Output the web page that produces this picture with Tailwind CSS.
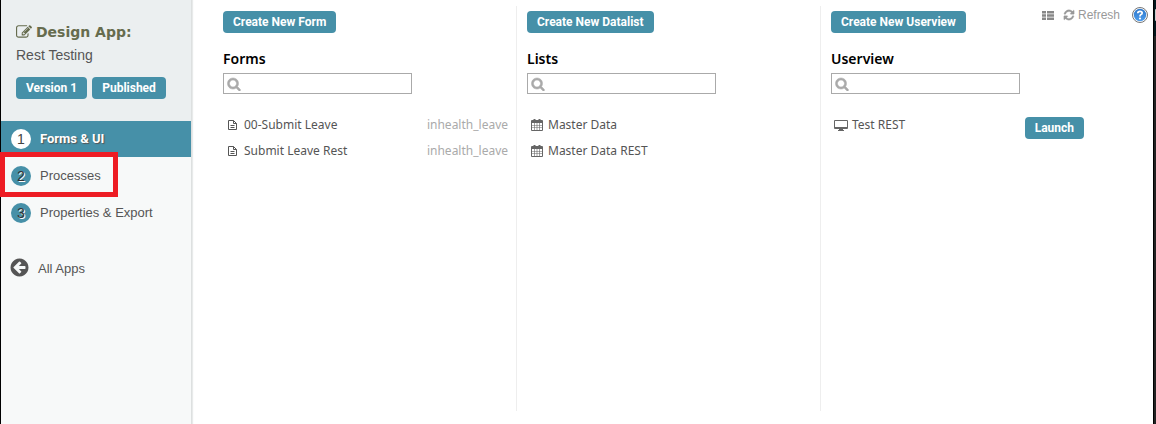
<!DOCTYPE html>
<html lang="en">
<head>
<meta charset="utf-8">
<meta name="viewport" content="width=device-width, initial-scale=1">
<title>Design App: Rest Testing</title>
<script src="https://cdn.jsdelivr.net/npm/@tailwindcss/browser@4"></script>
</head>
<body class="min-h-screen bg-white font-['Liberation_Sans',Arial,sans-serif] text-[13px] text-[#555]">
<svg class="hidden" aria-hidden="true">
  <symbol id="search" viewBox="0 0 1792 1792"><path stroke="currentColor" stroke-width="70" d="M1216 832q0-185-131.500-316.500t-316.500-131.500-316.500 131.500-131.500 316.500 131.500 316.500 316.500 131.500 316.500-131.500 131.500-316.500zm512 832q0 52-38 90t-90 38q-54 0-90-38l-343-342q-179 124-399 124-143 0-273.500-55.500t-225-150-150-225-55.500-273.500 55.500-273.500 150-225 225-150 273.500-55.500 273.500 55.500 225 150 150 225 55.500 273.500q0 220-124 399l343 343q37 37 37 90z"/></symbol>
  <symbol id="file" viewBox="0 0 9 10"><path fill="none" stroke="currentColor" d="M.5.5h5l3 3v6h-8zM5.500.5v3h3M2.500 5.500h4M2.500 7.500h4"/></symbol>
  <symbol id="calendar" viewBox="0 0 12 12"><path fill="#666" fill-rule="evenodd" d="M1 1h1.500V0h2v1h3V0h2v1H11q1 0 1 1v9q0 1-1 1H1q-1 0-1-1V2q0-1 1-1zM1 4v2h2V4zM3.600 4v2h2.100V4zM6.300 4v2h2.100V4zM9 4v2h2V4zM1 6.600v1.900h2V6.600zM3.600 6.600v1.900h2.100V6.600zM6.300 6.600v1.900h2.100V6.600zM9 6.600v1.900h2V6.600zM1 9.100V11h2V9.100zM3.600 9.100V11h2.100V9.100zM6.300 9.100V11h2.100V9.100zM9 9.100V11h2V9.100z"/></symbol>
</svg>
<div class="flex min-h-screen border-l border-black">
  <aside class="w-[191px] shrink-0 border-r border-[#dde0e0] bg-[#f7f9f9] shadow-[1px_0_1px_#e8eaea]">
    <header class="bg-[#ebeff0] px-[15px] pt-[22px] pb-[22px]">
      <h1 class="flex h-5 items-center gap-1 font-['DejaVu_Sans',sans-serif] text-sm leading-5 font-bold text-[#666c4e]">
        <svg class="size-4 shrink-0" viewBox="0 0 1792 1792" fill="currentColor"><path d="M888 1184l116-116-152-152-116 116v56h96v96h56zm440-720q-16-16-33 1l-350 350q-17 17-1 33t33-1l350-350q17-17 1-33zm80 594v190q0 119-84.500 203.500t-203.500 84.500h-832q-119 0-203.500-84.500t-84.500-203.500v-832q0-119 84.500-203.500t203.500-84.500h832q63 0 117 25 15 7 18 23 3 17-9 29l-49 49q-14 14-32 8-23-6-45-6h-832q-66 0-113 47t-47 113v832q0 66 47 113t113 47h832q66 0 113-47t47-113v-126q0-13 9-22l64-64q15-15 35-7t20 29zm-96-738l288 288-672 672h-288v-288zm444 132l-92 92-288-288 92-92q28-28 68-28t68 28l152 152q28 28 28 68t-28 68z"/></svg>
        <span class="whitespace-nowrap">Design App:</span>
      </h1>
      <p class="mt-1 text-sm leading-[18px]">Rest Testing</p>
      <div class="mt-[13px] flex gap-[5px]">
        <button class="h-[22px] rounded bg-[#4690a8] px-[10px] font-[Roboto,sans-serif] text-xs font-bold whitespace-nowrap text-white">Version 1</button>
        <button class="h-[22px] rounded bg-[#4690a8] px-[10px] font-[Roboto,sans-serif] text-xs font-bold whitespace-nowrap text-white">Published</button>
      </div>
    </header>
    <nav>
      <a href="#forms" class="flex h-9 items-center gap-[9px] bg-[#4690a8] px-[10px] font-[Roboto,sans-serif] font-bold text-white text-shadow-[1px_1px_1px_#555]">
        <span class="flex size-5 items-center justify-center rounded-full bg-white font-['Liberation_Sans',Arial,sans-serif] text-sm font-normal text-[#444] text-shadow-none">1</span>Forms &amp; UI</a>
      <a href="#processes" class="relative flex h-[37px] items-center gap-[9px] px-[10px]">
        <span class="flex size-5 items-center justify-center rounded-full bg-[#4690a8] text-sm text-[#333] text-shadow-[1px_1px_0_#fff]">2</span>Processes
        <span class="absolute -top-[5px] -left-px h-[45px] w-[118px] border-5 border-[#ed1c24]"></span></a>
      <a href="#properties" class="flex h-[37px] items-center gap-[9px] px-[10px]">
        <span class="flex size-5 items-center justify-center rounded-full bg-[#4690a8] text-sm text-[#333] text-shadow-[1px_1px_0_#fff]">3</span>Properties &amp; Export</a>
      <a href="#apps" class="mt-5 flex h-9 items-center gap-2 px-2">
        <svg class="mb-1 size-[21px]" viewBox="0 0 1792 1792" fill="currentColor"><path d="M1408 960v-128q0-26-19-45t-45-19h-502l189-189q19-19 19-45t-19-45l-91-91q-18-18-45-18t-45 18l-362 362-91 91q-18 18-18 45t18 45l91 91 362 362q18 18 45 18t45-18l91-91q18-18 18-45t-18-45l-189-189h502q26 0 45-19t19-45zm256-64q0 209-103 385.500t-279.500 279.500-385.500 103-385.500-103-279.500-279.500-103-385.500 103-385.500 279.500-279.500 385.500-103 385.500 103 279.500 279.500 103 385.500z"/></svg>All Apps</a>
    </nav>
  </aside>

  <main class="relative grid min-w-0 grow grid-cols-3 pt-[6px] pr-7 pb-[13px] pl-[21px] font-['Noto_Sans',sans-serif] text-xs">
    <section class="border-r border-[#eee] pt-[5px] pr-2 pl-[10px]">
      <button class="block h-[22px] rounded bg-[#4690a8] px-[10px] font-[Roboto,sans-serif] text-xs font-bold whitespace-nowrap text-white">Create New Form</button>
      <h2 class="mt-4 text-sm leading-5 font-semibold text-black">Forms</h2>
      <label class="mt-1 flex h-[21px] w-[189px] items-center border border-[#aaa] pl-[3px] text-[#aaa]">
        <svg class="size-[14px] shrink-0" fill="currentColor"><use href="#search"/></svg>
        <input type="search" aria-label="Search forms" class="min-w-0 grow px-1 text-[#555] outline-none"></label>
      <ul class="mt-[18px] pl-[5px]">
        <li class="flex h-[26px] items-center gap-[7px]"><svg class="h-[10px] w-[9px] shrink-0"><use href="#file"/></svg><a href="#f1" class="grow">00-Submit Leave</a><span class="text-[#aaa]">inhealth_leave</span></li>
        <li class="flex h-[26px] items-center gap-[7px]"><svg class="h-[10px] w-[9px] shrink-0"><use href="#file"/></svg><a href="#f2" class="grow">Submit Leave Rest</a><span class="text-[#aaa]">inhealth_leave</span></li>
      </ul>
    </section>
    <section class="border-r border-[#eee] pt-[5px] pr-2 pl-[10px]">
      <button class="block h-[22px] rounded bg-[#4690a8] px-[10px] font-[Roboto,sans-serif] text-xs font-bold whitespace-nowrap text-white">Create New Datalist</button>
      <h2 class="mt-4 text-sm leading-5 font-semibold text-black">Lists</h2>
      <label class="mt-1 flex h-[21px] w-[189px] items-center border border-[#aaa] pl-[3px] text-[#aaa]">
        <svg class="size-[14px] shrink-0" fill="currentColor"><use href="#search"/></svg>
        <input type="search" aria-label="Search lists" class="min-w-0 grow px-1 text-[#555] outline-none"></label>
      <ul class="mt-[18px] pl-1">
        <li class="flex h-[26px] items-center gap-[5px]"><svg class="size-3 shrink-0"><use href="#calendar"/></svg><a href="#l1">Master Data</a></li>
        <li class="flex h-[26px] items-center gap-[5px]"><svg class="size-3 shrink-0"><use href="#calendar"/></svg><a href="#l2">Master Data REST</a></li>
      </ul>
    </section>
    <section class="pt-[5px] pl-[10px]">
      <button class="block h-[22px] rounded bg-[#4690a8] px-[10px] font-[Roboto,sans-serif] text-xs font-bold whitespace-nowrap text-white">Create New Userview</button>
      <h2 class="mt-4 text-sm leading-5 font-semibold text-black">Userview</h2>
      <label class="mt-1 flex h-[21px] w-[189px] items-center border border-[#aaa] pl-[3px] text-[#aaa]">
        <svg class="size-[14px] shrink-0" fill="currentColor"><use href="#search"/></svg>
        <input type="search" aria-label="Search userviews" class="min-w-0 grow px-1 text-[#555] outline-none"></label>
      <div class="mt-[18px] flex items-start justify-between pr-[41px] pl-[3px]">
        <a href="#u1" class="flex h-[26px] items-center gap-1"><svg class="h-[11px] w-[14px]" viewBox="0 0 14 11" fill="#666"><path fill-rule="evenodd" d="M1 0h12q1 0 1 1v7q0 1-1 1H9v1h1v1H4v-1h1V9H1Q0 9 0 8V1q0-1 1-1zM1 1v6h12V1z"/></svg>Test REST</a>
        <button class="mt-[5px] h-[22px] rounded bg-[#4690a8] px-[10px] font-[Roboto,sans-serif] text-xs font-bold text-white">Launch</button>
      </div>
    </section>
    <div class="absolute top-[5px] right-[5px] flex h-5 items-center font-['Liberation_Sans',Arial,sans-serif] text-xs text-[#999]">
      <button aria-label="List view"><svg class="h-[9px] w-3" viewBox="0 0 12 9" fill="#888"><path d="M0 0h4v2.500H0zM5 0h7v2.500H5zM0 3.250h4v2.500H0zM5 3.250h7v2.500H5zM0 6.500h4V9H0zM5 6.500h7V9H5z"/></svg></button>
      <button class="ml-[9px] flex items-center gap-[3px]"><svg class="size-3" viewBox="0 0 1792 1792" fill="currentColor" stroke="currentColor" stroke-width="50"><path d="M1639 1056q0 5-1 7-64 268-268 434.500t-478 166.500q-146 0-282.500-55t-243.500-157l-129 129q-19 19-45 19t-45-19-19-45v-448q0-26 19-45t45-19h448q26 0 45 19t19 45-19 45l-137 137q71 66 161 102t187 36q134 0 250-65t186-179q11-17 53-117 8-23 30-23h192q13 0 22.500 9.500t9.500 22.500zm25-800v448q0 26-19 45t-45 19h-448q-26 0-45-19t-19-45 19-45l138-138q-148-137-349-137-134 0-250 65t-186 179q-11 17-53 117-8 23-30 23h-199q-13 0-22.500-9.500t-9.500-22.500v-7q65-268 270-434.500t480-166.500q146 0 284 55.500t245 156.500l130-129q19-19 45-19t45 19 19 45z"/></svg>Refresh</button>
      <button aria-label="Help" class="ml-3"><svg class="size-4" viewBox="0 0 16 16"><defs><linearGradient id="help" x2="0" y2="1"><stop stop-color="#2f78ca"/><stop offset="1" stop-color="#4c9cec"/></linearGradient></defs><circle cx="8" cy="8" r="7.500" fill="#fff" stroke="#777"/><circle cx="8" cy="8" r="6.200" fill="url(#help)"/><path d="M5.800 6.300Q5.800 4.300 8 4.300t2.200 1.800Q10.200 7.200 8.700 7.800 8 8.200 8 9.400" fill="none" stroke="#fff" stroke-width="1.700"/><circle cx="8" cy="11.500" r="1.100" fill="#fff"/></svg></button>
    </div>
  </main>
  <div class="w-[3px] shrink-0 border-l border-black bg-[#222]"><div class="flex h-9 justify-end bg-[#02171c] pt-[9px]"><span class="h-3 w-px rounded-l bg-[#ccc]"></span></div></div>
</div>
</body>
</html>
